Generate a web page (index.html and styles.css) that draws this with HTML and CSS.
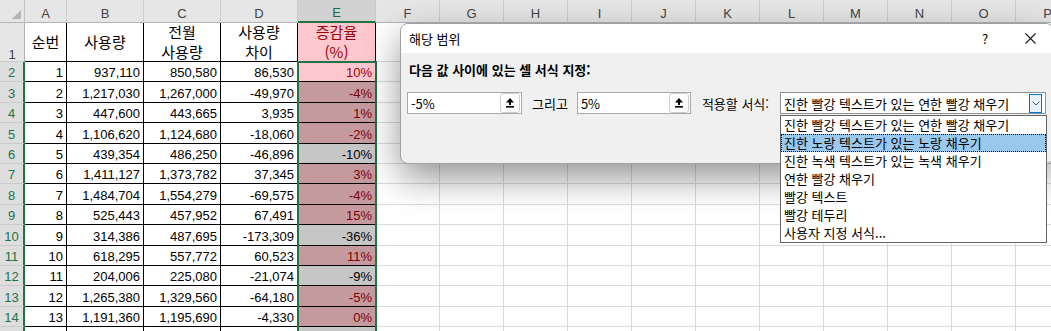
FILE: index.html
```html
<!DOCTYPE html>
<html lang="ko">
<head>
  <meta charset="UTF-8" />
  <title>셀 강조 규칙 - 해당 범위</title>
  <link rel="stylesheet" href="styles.css">
</head>
<body>
  <div class="app">
    <div class="sheet" id="sheet">
      <div class="corner"><svg width="9" height="9" viewBox="0 0 9 9"><polygon points="9,0 9,9 0,9" fill="#b4b4b4"/></svg></div>
      <div class="col-head">A</div>
      <div class="col-head">B</div>
      <div class="col-head">C</div>
      <div class="col-head">D</div>
      <div class="col-head sel">E</div>
      <div class="col-head">F</div>
      <div class="col-head">G</div>
      <div class="col-head">H</div>
      <div class="col-head">I</div>
      <div class="col-head">J</div>
      <div class="col-head">K</div>
      <div class="col-head">L</div>
      <div class="col-head">M</div>
      <div class="col-head">N</div>
      <div class="col-head">O</div>
      <div class="col-head">P</div>

      <div class="row-head first">1</div>
      <div class="cell data title">순번</div>
      <div class="cell data title">사용량</div>
      <div class="cell data title"><span>전월</span><span>사용량</span></div>
      <div class="cell data title"><span>사용량</span><span>차이</span></div>
      <div class="cell data title pink"><span>증감율</span><span>(%)</span></div>
      <div class="cell"></div><div class="cell"></div><div class="cell"></div><div class="cell"></div>
      <div class="cell"></div><div class="cell"></div><div class="cell"></div><div class="cell"></div>
      <div class="cell"></div><div class="cell"></div><div class="cell"></div>

      <div class="selection"></div>
    </div>

    <div class="dialog">
      <div class="dialog-title">
        <span class="dialog-name">해당 범위</span>
        <span class="title-btn">?</span>
        <span class="title-btn close">
          <svg width="11" height="11" viewBox="0 0 11 11"><path d="M0.5 0.5 L10.5 10.5 M10.5 0.5 L0.5 10.5" stroke="#1a1a1a" stroke-width="1.1"/></svg>
        </span>
      </div>
      <div class="dialog-body">
        <div class="prompt">다음 값 사이에 있는 셀 서식 지정:</div>
        <div class="field-row">
          <div class="range-input">
            <span>-5%</span>
            <span class="collapse-btn"><svg width="8" height="10" viewBox="0 0 8 10"><path d="M4 0 L8 4.5 L5 4.5 L5 7 L3 7 L3 4.5 L0 4.5 Z" fill="#000"/><rect x="0" y="8" width="8" height="1.6" fill="#000"/></svg></span>
          </div>
          <span class="field-label and">그리고</span>
          <div class="range-input second">
            <span>5%</span>
            <span class="collapse-btn"><svg width="8" height="10" viewBox="0 0 8 10"><path d="M4 0 L8 4.5 L5 4.5 L5 7 L3 7 L3 4.5 L0 4.5 Z" fill="#000"/><rect x="0" y="8" width="8" height="1.6" fill="#000"/></svg></span>
          </div>
          <span class="field-label">적용할 서식:</span>
          <div class="combo">
            <span>진한 빨강 텍스트가 있는 연한 빨강 채우기</span>
            <span class="drop-btn"><svg width="8" height="5" viewBox="0 0 8 5"><path d="M0.5 0.5 L4 4 L7.5 0.5" fill="none" stroke="#555" stroke-width="1"/></svg></span>
          </div>
        </div>
      </div>
      <ul class="format-list">
        <li>진한 빨강 텍스트가 있는 연한 빨강 채우기</li>
        <li class="hover">진한 노랑 텍스트가 있는 노랑 채우기</li>
        <li>진한 녹색 텍스트가 있는 녹색 채우기</li>
        <li>연한 빨강 채우기</li>
        <li>빨강 텍스트</li>
        <li>빨강 테두리</li>
        <li>사용자 지정 서식...</li>
      </ul>
    </div>
  </div>

  <script>
    const sheet = document.getElementById('sheet');
    const selection = sheet.querySelector('.selection');

    // 순번, 사용량, 전월 사용량, 차이, 증감율, 서식
    const rows = [
      [1, '937,110', '850,580', '86,530', '10%', 'act'],
      [2, '1,217,030', '1,267,000', '-49,970', '-4%', 'red'],
      [3, '447,600', '443,665', '3,935', '1%', 'red'],
      [4, '1,106,620', '1,124,680', '-18,060', '-2%', 'red'],
      [5, '439,354', '486,250', '-46,896', '-10%', 'gray'],
      [6, '1,411,127', '1,373,782', '37,345', '3%', 'red'],
      [7, '1,484,704', '1,554,279', '-69,575', '-4%', 'red'],
      [8, '525,443', '457,952', '67,491', '15%', 'red'],
      [9, '314,386', '487,695', '-173,309', '-36%', 'gray'],
      [10, '618,295', '557,772', '60,523', '11%', 'red'],
      [11, '204,006', '225,080', '-21,074', '-9%', 'gray'],
      [12, '1,265,380', '1,329,560', '-64,180', '-5%', 'red'],
      [13, '1,191,360', '1,195,690', '-4,330', '0%', 'red'],
      ['', '', '', '', '', 'gray']
    ];

    rows.forEach((row, index) => {
      // 마지막 행은 화면 아래에서 잘리므로 번호를 비워 둔다
      const label = row[0] === '' ? '' : index + 2;
      let html = `<div class="row-head sel">${label}</div>`;
      for (let i = 0; i < 4; i++) {
        html += `<div class="cell data num">${row[i]}</div>`;
      }
      html += `<div class="cell data num pct ${row[5]}">${row[4]}</div>`;
      for (let i = 0; i < 11; i++) {
        html += '<div class="cell"></div>';
      }
      selection.insertAdjacentHTML('beforebegin', html);
    });
  </script>
</body>
</html>
```

FILE: styles.css
```css
body {
  margin: 0;
  font-family: 'Noto Sans CJK KR', sans-serif;
  background-color: #fff;
}
.app {
  position: relative;
  width: 1051px;
  height: 331px;
  overflow: hidden;
}
.sheet {
  position: relative;
  display: grid;
  grid-template-columns: 25px 42px 77px 77px 77px 78px repeat(11, 64px);
  grid-template-rows: 23px 39px repeat(14, 20.4px);
  font-family: 'Liberation Sans', 'Noto Sans CJK KR', sans-serif;
  font-size: 13px;
  color: #000;
}
.sheet > div {
  box-sizing: border-box;
  border-right: 1px solid #dadada;
  border-bottom: 1px solid #dadada;
}
.corner {
  background-color: #e6e6e6;
  display: flex;
  align-items: flex-end;
  justify-content: flex-end;
  padding: 0 3px 3px 0;
  border-right-color: #c4c4c4 !important;
  border-bottom-color: #b4b4b4 !important;
}
.corner svg {
  display: block;
}
.col-head {
  background-color: #e6e6e6;
  color: #444;
  display: flex;
  align-items: center;
  justify-content: center;
  padding-top: 4px;
  border-right-color: #cbcbcb !important;
  border-bottom-color: #b4b4b4 !important;
}
.col-head.sel {
  background-color: #d2d2d2;
  color: #1e6b41;
  border-bottom: 2px solid #217346 !important;
}
.row-head {
  background-color: #e6e6e6;
  color: #444;
  display: flex;
  align-items: flex-end;
  justify-content: center;
  line-height: 15px;
  padding-bottom: 1px;
  border-right-color: #b4b4b4 !important;
  border-bottom-color: #cbcbcb !important;
}
.row-head.first {
  line-height: 13px;
  padding-bottom: 0;
}
.row-head.sel {
  background-color: #dedede;
  color: #217346;
  border-right: 2px solid #217346 !important;
}
.cell.data {
  border-right-color: #000;
  border-bottom-color: #000;
}
.title {
  display: flex;
  flex-direction: column;
  align-items: center;
  justify-content: center;
  font-family: 'Noto Sans CJK KR', sans-serif;
  font-size: 15px;
  line-height: 20px;
  white-space: nowrap;
}
.title.pink {
  background-color: #ffc7ce;
  color: #9c0006;
}
.num {
  display: flex;
  align-items: flex-end;
  justify-content: flex-end;
  line-height: 15px;
  padding: 0 3px 1px 0;
  white-space: nowrap;
}
.pct.act {
  background-color: #ffc7ce;
  color: #9c0006;
}
.pct.red {
  background-color: #c59a9e;
  color: #7d0005;
}
.pct.gray {
  background-color: #c6c6c6;
}
.sheet > .selection {
  position: absolute;
  left: 297px;
  top: 61px;
  width: 80px;
  height: 280px;
  border: 2px solid #217346;
}

/* dialog */
.dialog {
  position: absolute;
  left: 400px;
  top: 23px;
  width: 654px;
  height: 141px;
  box-sizing: border-box;
  background-color: #f0f0f0;
  border: 1px solid #a0a0a0;
  border-radius: 8px;
  box-shadow: 0 14px 36px rgb(0 0 0 / 0.42);
  font-size: 13px;
  color: #000;
}
.dialog-title {
  height: 29px;
  background-color: #fff;
  border-radius: 7px 7px 0 0;
  display: flex;
  align-items: center;
}
.dialog-name {
  flex-grow: 1;
  padding-left: 8px;
}
.title-btn {
  width: 44px;
  text-align: center;
}
.title-btn.close {
  width: 46px;
  display: flex;
  justify-content: center;
}
.dialog-body {
  padding: 8px 7px 0 6px;
}
.prompt {
  font-weight: 700;
  line-height: 18px;
  padding-left: 2px;
}
.field-row {
  display: flex;
  align-items: center;
  margin-top: 13px;
  height: 22px;
}
.range-input {
  box-sizing: border-box;
  width: 115px;
  height: 22px;
  background-color: #fff;
  border: 1px solid #a8a8a8;
  display: flex;
  align-items: center;
  padding: 0 1px 0 3px;
}
.range-input.second {
  width: 114px;
}
.collapse-btn {
  margin-left: auto;
  box-sizing: border-box;
  width: 20px;
  height: 20px;
  border: 1px solid #cdcdcd;
  border-radius: 3px;
  display: flex;
  align-items: center;
  justify-content: center;
}
.field-label {
  margin-left: 11px;
  white-space: nowrap;
}
.field-label.and {
  margin: 0 9px 0 10px;
}
.combo {
  margin-left: auto;
  box-sizing: border-box;
  width: 266px;
  height: 22px;
  background-color: #fff;
  border: 1px solid #8f8f8f;
  display: flex;
  align-items: center;
  padding-left: 3px;
  white-space: nowrap;
}
.drop-btn {
  margin-left: auto;
  margin-right: 3px;
  box-sizing: border-box;
  width: 13px;
  height: 19px;
  border: 1px solid #0078d7;
  background-color: #e5f1fb;
  display: flex;
  align-items: center;
  justify-content: center;
}
.format-list {
  position: absolute;
  left: 379px;
  top: 91px;
  width: 267px;
  height: 128px;
  box-sizing: border-box;
  margin: 0;
  padding: 0;
  list-style: none;
  background-color: #fff;
  border: 1px solid #646464;
}
.format-list li {
  box-sizing: border-box;
  height: 18px;
  line-height: 16px;
  padding-left: 2px;
  border: 1px solid transparent;
  white-space: nowrap;
}
.format-list li.hover {
  background-color: #99c9ef;
  border: 1px dotted #000;
}
```
